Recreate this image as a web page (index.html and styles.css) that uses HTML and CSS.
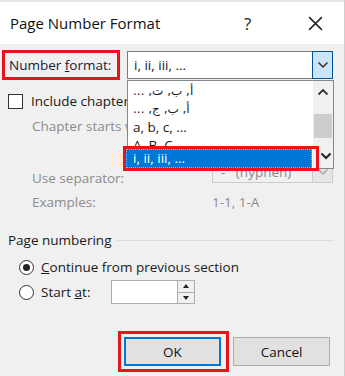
FILE: index.html
```html
<!DOCTYPE html>
<html>
<head>
<meta charset="utf-8">
<link rel="stylesheet" href="styles.css">
</head>
<body>
<div class="dialog">
  <div class="titlebar">
    <span class="title">Page Number Format</span>
    <span class="help">?</span>
    <svg class="close" width="17" height="17" viewBox="0 0 16 16"><path d="M2 2L14 14M14 2L2 14" stroke="#222" stroke-width="1.4"/></svg>
  </div>
  <div class="content">
    <div class="row format-row">
      <div class="label-box"><span>Number <u>f</u>ormat:</span></div>
      <div class="combo">
        <span class="combo-text">i, ii, iii, ...</span>
        <span class="combo-btn"><svg width="12" height="8" viewBox="0 0 12 8"><path d="M1.5 1.5L6 6L10.5 1.5" fill="none" stroke="#333" stroke-width="1.5"/></svg></span>
      </div>
    </div>
    <div class="row check-row">
      <span class="checkbox"></span><span class="check-label">Include chapter number</span>
    </div>
    <div class="row indent disabled r-chapter"><span>Chapter starts with style</span></div>
    <div class="row indent disabled r-sep">
      <span class="lbl">Use separator:</span>
      <div class="sep-combo"><span>-&nbsp;&nbsp;&nbsp;(hyphen)</span><span class="sep-btn"><svg width="12" height="8" viewBox="0 0 12 8"><path d="M1.5 1.5L6 6L10.5 1.5" fill="none" stroke="#aaa" stroke-width="1.5"/></svg></span></div>
    </div>
    <div class="row indent disabled r-ex"><span class="lbl">Examples:</span><span>1-1, 1-A</span></div>
    <div class="group-head"><span>Page numbering</span><span class="line"></span></div>
    <div class="row radio-row r-cont"><span class="radio checked"></span><span><u>C</u>ontinue from previous section</span></div>
    <div class="row radio-row r-start">
      <span class="radio"></span><span class="start-lbl">Start <u>a</u>t:</span>
      <div class="spin"><span class="spin-field"></span><span class="spin-btns"><span class="up"></span><span class="down"></span></span></div>
    </div>
    <div class="buttons">
      <div class="ok-box"><button class="btn ok">OK</button></div>
      <button class="btn cancel">Cancel</button>
    </div>

    <div class="list">
      <div class="items">
        <div class="item ar">أ, ب, ت, ...</div>
        <div class="item ar">أ, ب, ج, ...</div>
        <div class="item">a, b, c, ...</div>
        <div class="item cut">A, B, C, ...</div>
      </div>
      <div class="scroll">
        <svg class="arr" width="12" height="8" viewBox="0 0 12 8"><path d="M1.5 6.5L6 2L10.5 6.5" fill="none" stroke="#333" stroke-width="1.8"/></svg>
        <span class="thumb"></span>
        <svg class="arr down-a" width="12" height="8" viewBox="0 0 12 8"><path d="M1.5 1.5L6 6L10.5 1.5" fill="none" stroke="#222" stroke-width="2"/></svg>
      </div>
      <div class="sel-box"><div class="sel">i, ii, iii, ...</div></div>
    </div>
  </div>
</div>
</body>
</html>
```

FILE: styles.css
```css
* { box-sizing: border-box; }
html, body { margin: 0; padding: 0; }
body {
  width: 345px;
  height: 376px;
  overflow: hidden;
  background: #f0f0f0;
  font-family: "Open Sans", "Noto Sans", sans-serif;
  font-size: 13.5px;
  color: #1a1a1a;
}
.dialog { width: 345px; height: 376px; border-right: 1px solid #cfcfcf; background: #f0f0f0; }
.titlebar {
  height: 44px;
  background: #fff;
  display: flex;
  align-items: center;
  padding-left: 10px;
  border-top: 2px solid #e6e6e6;
}
.title { font-size: 15px; color: #111; flex: 1; }
.help { font-size: 17px; width: 20px; margin-right: 43px; color: #222; }
.close { margin-right: 20px; }
.content { position: relative; padding-top: 6px; }
.row { display: flex; align-items: center; }
.format-row { height: 30px; }
.label-box {
  margin-left: 2px;
  width: 118px;
  height: 30px;
  border: 3px solid #e8141b;
  display: flex;
  align-items: center;
  padding-left: 4px;
  color: #1a1a3a;
}
.combo {
  margin-left: 7px;
  width: 206px;
  height: 28px;
  background: #fff;
  border: 1px solid #7a7a7a;
  display: flex;
  align-items: center;
}
.combo-text { flex: 1; padding-left: 6px; }
.combo-btn {
  width: 21px;
  height: 28px;
  margin: -1px -1px -1px 0;
  background: #cce4f7;
  border: 1px solid #005499;
  display: flex;
  align-items: center;
  justify-content: center;
}
.check-row { margin-top: 13px; height: 16px; }
.checkbox { margin-left: 8px; width: 15px; height: 15px; border: 1px solid #333; background: #fff; }
.check-label { margin-left: 8px; white-space: nowrap; }
.indent { padding-left: 32px; }
.disabled { color: #8c8c8c; }
.r-chapter { margin-top: 7px; height: 20px; }
.r-sep { margin-top: 32px; height: 20px; }
.r-sep .lbl { width: 180px; }
.sep-combo {
  width: 121px;
  height: 21px;
  border: 1px solid #cccccc;
  background: #f0f0f0;
  display: flex;
  align-items: center;
  padding-left: 8px;
  justify-content: space-between;
  margin-top: -12px;
}
.sep-btn { width: 20px; height: 19px; border-left: 1px solid #ccc; background: #e5e5e5; display: flex; align-items: center; justify-content: center; }
.r-ex { margin-top: 4px; height: 20px; }
.r-ex .lbl { width: 180px; }
.group-head { display: flex; align-items: center; margin-top: 18px; padding-left: 8px; height: 20px; }
.group-head .line { flex: 1; height: 1px; background: #dcdcdc; margin-left: 6px; margin-right: 10px; }
.radio-row { padding-left: 19px; height: 20px; }
.r-cont { margin-top: 7px; }
.r-start { margin-top: 3px; height: 24px; }
.radio {
  width: 15px; height: 15px; border-radius: 50%;
  border: 1px solid #333; background: #fff; margin-right: 7px;
  display: flex; align-items: center; justify-content: center;
}
.radio.checked::after { content: ""; width: 7px; height: 7px; border-radius: 50%; background: #222; }
.start-lbl { width: 70px; }
.spin { display: flex; height: 24px; border: 1px solid #adadad; background: #fff; width: 84px; }
.spin-field { flex: 1; }
.spin-btns { width: 17px; border-left: 1px solid #adadad; display: flex; flex-direction: column; background: #f0f0f0; }
.spin-btns span { flex: 1; display: flex; align-items: center; justify-content: center; }
.spin-btns .up { border-bottom: 1px solid #adadad; }
.spin-btns .up::after { content: ""; border-left: 3px solid transparent; border-right: 3px solid transparent; border-bottom: 4px solid #222; }
.spin-btns .down::after { content: ""; border-left: 3px solid transparent; border-right: 3px solid transparent; border-top: 4px solid #222; }
.buttons { display: flex; align-items: center; margin-top: 27px; padding-left: 118px; }
.ok-box { border: 3px solid #e8141b; padding: 3px 5px 3px 3px; }
.btn {
  font-family: inherit; font-size: 13.5px; color: #111;
  width: 97px; height: 29px; background: #e1e1e1; border: 1px solid #adadad; padding: 0;
}
.btn.ok { border: 2px solid #0078d7; }
.cancel { margin-left: 4px; }
.list {
  position: absolute;
  left: 127px; top: 36px;
  width: 207px; height: 89px;
  background: #fff;
  border: 1px solid #828790;
  display: flex;
}
.items { flex: 1; padding-top: 1px; overflow: hidden; }
.item { height: 18px; line-height: 18px; padding-left: 5px; white-space: nowrap; }
.item.ar { font-family: "DejaVu Sans", sans-serif; font-size: 12px; direction: rtl; text-align: left; unicode-bidi: plaintext; }
.item.cut { height: 14px; }
.scroll {
  width: 20px; background: #f0f0f0;
  display: flex; flex-direction: column; align-items: center;
  padding-top: 7px;
}
.arr { flex: none; display: block; }
.thumb { flex: none; margin-top: 18px; width: 18px; height: 24px; background: #cdcdcd; }
.down-a { margin-top: 14px; margin-left: 6px; position: relative; z-index: 2; }
.sel-box {
  position: absolute;
  left: -5px; top: 65px;
  width: 196px; height: 25px;
  border: 3px solid #e8141b;
  z-index: 1;
}
.sel {
  height: 19px; background: #0078d7; color: #fff; line-height: 17px;
  padding-left: 6px; border: 1px dotted #d9a46b; width: 186px;
}
```
